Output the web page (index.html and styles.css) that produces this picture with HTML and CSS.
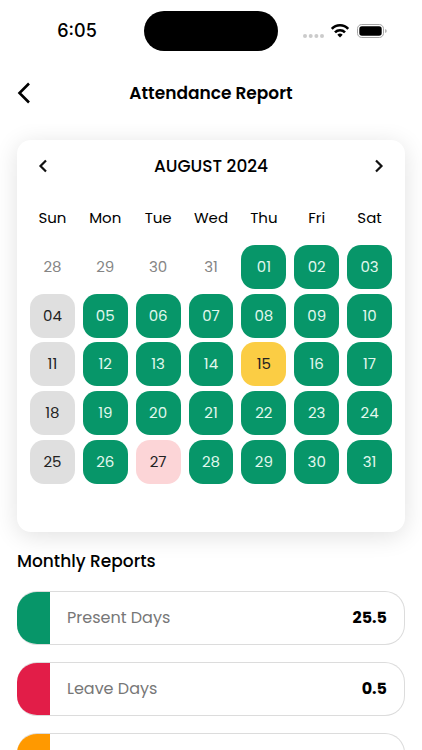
FILE: index.html
```html
<!DOCTYPE html>
<html lang="en">
<head>
	<title>Attendance Report</title>
	<meta charset="utf-8">
	<meta name="viewport" content="width=device-width, initial-scale=1">
	<link rel="stylesheet" href="styles.css">
</head>
<body>
	<div class="app">
		<div class="status">
			<div class="status__time">6:05</div>
			<div class="status__island"></div>
			<div class="status__icons">
				<svg width="86" height="20" viewBox="0 0 86 20">
					<g fill="#cbcbcb">
						<circle cx="3" cy="15" r="2"/>
						<circle cx="8.700" cy="15" r="2"/>
						<circle cx="14.400" cy="15" r="2"/>
						<circle cx="20" cy="15" r="2"/>
					</g>
					<g fill="none" stroke="#000" stroke-width="2.600">
						<path d="M29.800 7.800a11.200 11.200 0 0 1 16.400 0"/>
						<path d="M33 11.400a7 7 0 0 1 10 0"/>
					</g>
					<path d="M35.300 13.700a4 4 0 0 1 5.400 0L38 16.500z"/>
					<rect x="55.500" y="3.500" width="26" height="13" rx="4.200" fill="#fff" stroke="#a5a5a5"/>
					<rect x="57.300" y="5.300" width="22.400" height="9.400" rx="2.600"/>
					<path d="M83.200 8v4q1.500-.6 1.500-2t-1.500-2z" fill="#a5a5a5"/>
				</svg>
			</div>
		</div>

		<header class="header">
			<button class="header__back" type="button" aria-label="Back">
				<svg width="14" height="22" viewBox="0 0 14 22"><path d="M12 1.500L2.500 11l9.500 9.500" fill="none" stroke="#000" stroke-width="2.600"/></svg>
			</button>
			<h1 class="header__title">Attendance Report</h1>
		</header>

		<main class="content">
			<section class="calendar">
				<div class="calendar__top">
					<button class="calendar__arrow" type="button" aria-label="Previous month">
						<svg width="10" height="14" viewBox="0 0 10 14"><path d="M8 1.500L2.500 7 8 12.500" fill="none" stroke="#111" stroke-width="2.200"/></svg>
					</button>
					<h2 class="calendar__month">AUGUST 2024</h2>
					<button class="calendar__arrow" type="button" aria-label="Next month">
						<svg width="10" height="14" viewBox="0 0 10 14"><path d="M2 1.500L7.500 7 2 12.500" fill="none" stroke="#111" stroke-width="2.200"/></svg>
					</button>
				</div>
				<table class="calendar__table">
					<thead>
						<tr><th>Sun</th><th>Mon</th><th>Tue</th><th>Wed</th><th>Thu</th><th>Fri</th><th>Sat</th></tr>
					</thead>
					<tbody>
						<tr>
							<td><button class="day day_out">28</button></td>
							<td><button class="day day_out">29</button></td>
							<td><button class="day day_out">30</button></td>
							<td><button class="day day_out">31</button></td>
							<td><button class="day">01</button></td>
							<td><button class="day">02</button></td>
							<td><button class="day">03</button></td>
						</tr>
						<tr>
							<td><button class="day day_off">04</button></td>
							<td><button class="day">05</button></td>
							<td><button class="day">06</button></td>
							<td><button class="day">07</button></td>
							<td><button class="day">08</button></td>
							<td><button class="day">09</button></td>
							<td><button class="day">10</button></td>
						</tr>
						<tr>
							<td><button class="day day_off">11</button></td>
							<td><button class="day">12</button></td>
							<td><button class="day">13</button></td>
							<td><button class="day">14</button></td>
							<td><button class="day day_holiday">15</button></td>
							<td><button class="day">16</button></td>
							<td><button class="day">17</button></td>
						</tr>
						<tr>
							<td><button class="day day_off">18</button></td>
							<td><button class="day">19</button></td>
							<td><button class="day">20</button></td>
							<td><button class="day">21</button></td>
							<td><button class="day">22</button></td>
							<td><button class="day">23</button></td>
							<td><button class="day">24</button></td>
						</tr>
						<tr>
							<td><button class="day day_off">25</button></td>
							<td><button class="day">26</button></td>
							<td><button class="day day_leave">27</button></td>
							<td><button class="day">28</button></td>
							<td><button class="day">29</button></td>
							<td><button class="day">30</button></td>
							<td><button class="day">31</button></td>
						</tr>
					</tbody>
				</table>
			</section>

			<section class="reports">
				<h2 class="reports__title">Monthly Reports</h2>
				<ul class="reports__list">
					<li class="report report_present">
						<span class="report__name">Present Days</span>
						<span class="report__value">25.5</span>
					</li>
					<li class="report report_leave">
						<span class="report__name">Leave Days</span>
						<span class="report__value">0.5</span>
					</li>
					<li class="report report_late"></li>
				</ul>
			</section>
		</main>
	</div>
</body>
</html>
```

FILE: styles.css
```css
* {
	box-sizing: border-box;
}
body {
	margin: 0;
	background: #fff;
	color: #000;
	font-family: Poppins, Inter, "Open Sans", sans-serif;
	font-size: 16px;
	line-height: 24px;
}
h1, h2, ul {
	margin: 0;
	padding: 0;
}
button {
	padding: 0;
	border: 0;
	background: none;
	color: inherit;
	font: inherit;
	cursor: pointer;
}
svg {
	display: block;
}
.app {
	display: flex;
	flex-direction: column;
	height: 100vh;
	overflow: hidden;
}

/* status bar */
.status {
	display: grid;
	grid-template-columns: 1fr 134px 1fr;
	align-items: center;
	flex: none;
	height: 62px;
}
.status__time {
	padding-left: 10px;
	font-family: Inter, sans-serif;
	font-size: 18px;
	font-weight: 500;
	text-align: center;
}
.status__island {
	height: 40px;
	border-radius: 20px;
	background: #000;
}
.status__icons {
	padding-left: 24px;
}

/* header */
.header {
	display: grid;
	grid-template-columns: 40px 1fr 40px;
	align-items: center;
	flex: none;
	height: 62px;
	padding: 0 17px;
}
.header__title {
	font-size: 17px;
	font-weight: 600;
	text-align: center;
}

.content {
	flex: 1;
	min-height: 0;
	padding: 16px 17px;
	overflow-y: auto;
	scrollbar-width: none;
}

/* calendar */
.calendar {
	padding: 0 9px 46px;
	border-radius: 14px;
	background: #fff;
	box-shadow: 0 4px 24px rgba(0, 0, 0, 0.12);
}
.calendar__top {
	display: flex;
	align-items: center;
	justify-content: space-between;
	height: 52px;
	padding: 0 12px;
}
.calendar__month {
	font-size: 17px;
	font-weight: 500;
}
.calendar__table, .calendar__table thead {
	display: block;
}
.calendar__table tr {
	display: grid;
	grid-template-columns: repeat(7, 1fr);
	align-items: center;
}
.calendar__table thead tr {
	height: 51px;
}
.calendar__table tbody {
	display: grid;
	grid-template-rows: repeat(5, 1fr);
	height: 243px;
}
.calendar__table th, .calendar__table td {
	padding: 0 4px;
	font-size: 15px;
	font-weight: 400;
	text-align: center;
}
.calendar__table th {
	padding: 0;
}
.day {
	display: block;
	width: 100%;
	height: 44px;
	border-radius: 14px;
	background: #079669;
	color: #e2f8ee;
}
.day_out {
	background: none;
	color: #858585;
}
.day_off {
	background: #dfdfdf;
	color: #222;
}
.day_holiday {
	background: #fbcd44;
	color: #222;
}
.day_leave {
	background: #fcd5d7;
	color: #222;
}

/* monthly reports */
.reports__title {
	padding: 17px 0 18px;
	font-size: 17px;
	font-weight: 500;
}
.reports__list {
	display: grid;
	gap: 17px;
	list-style: none;
}
.report {
	display: flex;
	align-items: center;
	height: 54px;
	padding-right: 17px;
	border: 1px solid #dcdcdc;
	border-left: 0;
	border-radius: 20px;
	overflow: hidden;
}
.report:before {
	content: '';
	align-self: stretch;
	width: 33px;
	margin: -1px 17px -1px 0;
	background: #079669;
}
.report_leave:before {
	background: #e21d48;
}
.report_late:before {
	background: #ff9900;
}
.report__name {
	flex: 1;
	color: #777;
}
.report__value {
	font-weight: 700;
}
```
